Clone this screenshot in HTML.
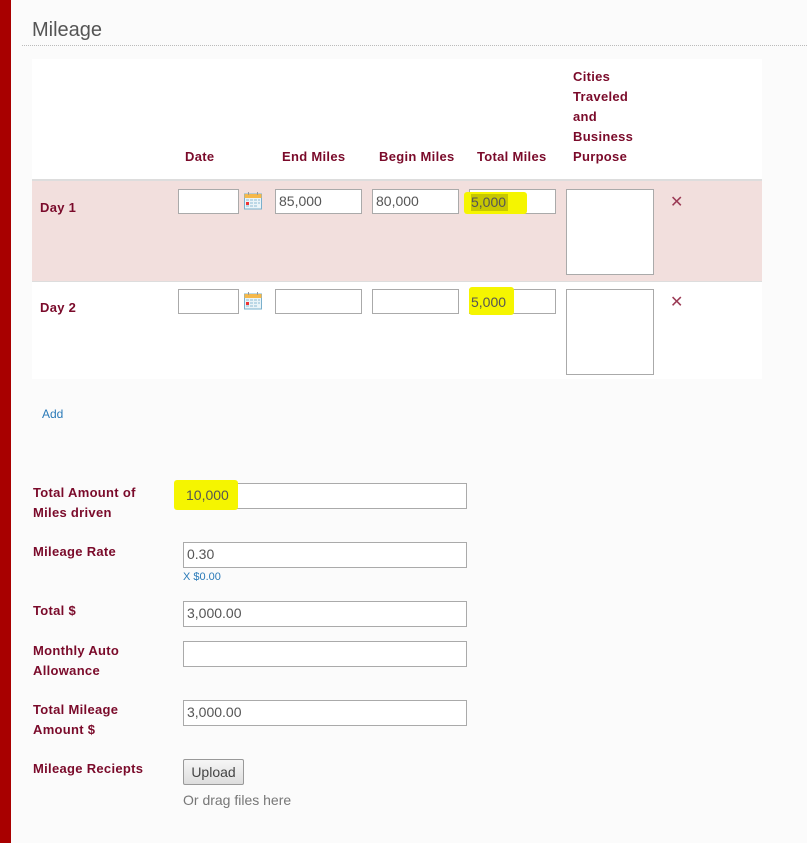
<!DOCTYPE html>
<html><head><meta charset="utf-8"><style>
*{box-sizing:border-box;margin:0;padding:0}
body{width:807px;height:843px;background:#fbfbfb;position:relative;overflow:hidden;font-family:"Liberation Sans",Arial,sans-serif}
.a{position:absolute}
.lbl{color:#7a0a2a;font-weight:bold;font-size:13px;line-height:20px;letter-spacing:0.3px}
.in{position:absolute;background:#fff;border:1px solid #aaa;font-size:14px;color:#555;padding-left:3px;line-height:23px}
.hl{position:absolute;background:#f5f500;border-radius:3px}
.x{position:absolute;color:#9b3a55;font-size:16px;line-height:20px}
</style></head><body>
<div class="a" style="left:0;top:0;width:11px;height:843px;background:#a80000"></div>
<div class="a" style="left:32px;top:19px;font-size:20px;color:#555">Mileage</div>
<div class="a" style="left:22px;top:45px;width:785px;border-top:1px dotted #bbb"></div>
<div class="a" style="left:32px;top:59px;width:730px;height:320px;background:#fff"></div>
<div class="a" style="left:32px;top:179px;width:730px;height:2px;background:#ddd"></div>
<div class="a" style="left:32px;top:181px;width:730px;height:100px;background:#f2dfdd"></div>
<div class="a" style="left:32px;top:281px;width:730px;height:1px;background:#ddd"></div>
<div class="a lbl" style="left:185px;top:147px">Date</div>
<div class="a lbl" style="left:282px;top:147px">End Miles</div>
<div class="a lbl" style="left:379px;top:147px">Begin Miles</div>
<div class="a lbl" style="left:477px;top:147px">Total Miles</div>
<div class="a lbl" style="left:573px;top:67px">Cities<br>Traveled<br>and<br>Business<br>Purpose</div>
<div class="a lbl" style="left:40px;top:198px">Day 1</div>
<div class="a lbl" style="left:40px;top:298px">Day 2</div>

<div class="in" style="left:178px;top:189px;width:61px;height:25px"></div>
<div class="in" style="left:275px;top:189px;width:87px;height:25px">85,000</div>
<div class="in" style="left:372px;top:189px;width:87px;height:25px">80,000</div>
<div class="in" style="left:469px;top:189px;width:87px;height:25px"></div>
<div class="hl" style="left:464px;top:192px;width:63px;height:22px"></div>
<div class="a" style="left:471px;top:194px;width:37px;height:17px;background:#c8c800"></div>
<div class="a" style="left:471px;top:191px;font-size:14px;line-height:23px;color:#555">5,000</div>
<div class="in" style="left:566px;top:189px;width:88px;height:86px"></div>
<div class="x" style="left:670px;top:193px">✕</div>

<div class="in" style="left:178px;top:289px;width:61px;height:25px"></div>
<div class="in" style="left:275px;top:289px;width:87px;height:25px"></div>
<div class="in" style="left:372px;top:289px;width:87px;height:25px"></div>
<div class="in" style="left:469px;top:289px;width:87px;height:25px"></div>
<div class="hl" style="left:469px;top:287px;width:45px;height:28px"></div>
<div class="a" style="left:471px;top:291px;font-size:14px;line-height:23px;color:#555">5,000</div>
<div class="in" style="left:566px;top:289px;width:88px;height:86px"></div>
<div class="x" style="left:670px;top:293px">✕</div>

<svg class="a" style="left:244px;top:192px" width="18" height="18" viewBox="0 0 18 18"><rect x="0.5" y="2" width="17" height="15" fill="#eaf4f8" stroke="#7ab0cc"/><rect x="0.5" y="2" width="17" height="4" fill="#f5b84a"/><g fill="#bcd8e6"><rect x="2" y="7" width="3" height="2"/><rect x="6" y="7" width="3" height="2"/><rect x="10" y="7" width="3" height="2"/><rect x="14" y="7" width="2" height="2"/><rect x="6" y="10" width="3" height="2"/><rect x="10" y="10" width="3" height="2"/><rect x="14" y="10" width="2" height="2"/><rect x="2" y="13" width="3" height="2"/><rect x="6" y="13" width="3" height="2"/><rect x="10" y="13" width="3" height="2"/></g><rect x="2" y="10" width="3" height="3" fill="#e33"/><rect x="4" y="0" width="1" height="3" fill="#999"/><rect x="13" y="0" width="1" height="3" fill="#999"/></svg>
<svg class="a" style="left:244px;top:292px" width="18" height="18" viewBox="0 0 18 18"><rect x="0.5" y="2" width="17" height="15" fill="#eaf4f8" stroke="#7ab0cc"/><rect x="0.5" y="2" width="17" height="4" fill="#f5b84a"/><g fill="#bcd8e6"><rect x="2" y="7" width="3" height="2"/><rect x="6" y="7" width="3" height="2"/><rect x="10" y="7" width="3" height="2"/><rect x="14" y="7" width="2" height="2"/><rect x="6" y="10" width="3" height="2"/><rect x="10" y="10" width="3" height="2"/><rect x="14" y="10" width="2" height="2"/><rect x="2" y="13" width="3" height="2"/><rect x="6" y="13" width="3" height="2"/><rect x="10" y="13" width="3" height="2"/></g><rect x="2" y="10" width="3" height="3" fill="#e33"/><rect x="4" y="0" width="1" height="3" fill="#999"/><rect x="13" y="0" width="1" height="3" fill="#999"/></svg>

<div class="a" style="left:42px;top:407px;font-size:12px;color:#2a7ab8">Add</div>

<div class="a lbl" style="left:33px;top:483px">Total Amount of<br>Miles driven</div>
<div class="in" style="left:183px;top:483px;width:284px;height:26px"></div>
<div class="hl" style="left:174px;top:480px;width:64px;height:30px"></div>
<div class="a" style="left:186px;top:484px;font-size:14px;line-height:23px;color:#555">10,000</div>
<div class="a lbl" style="left:33px;top:542px">Mileage Rate</div>
<div class="in" style="left:183px;top:542px;width:284px;height:26px">0.30</div>
<div class="a" style="left:183px;top:571px;font-size:11px;color:#2a7ab8">X $0.00</div>
<div class="a lbl" style="left:33px;top:601px">Total $</div>
<div class="in" style="left:183px;top:601px;width:284px;height:26px">3,000.00</div>
<div class="a lbl" style="left:33px;top:641px">Monthly Auto<br>Allowance</div>
<div class="in" style="left:183px;top:641px;width:284px;height:26px"></div>
<div class="a lbl" style="left:33px;top:700px">Total Mileage<br>Amount $</div>
<div class="in" style="left:183px;top:700px;width:284px;height:26px">3,000.00</div>
<div class="a lbl" style="left:33px;top:759px">Mileage Reciepts</div>
<div class="a" style="left:183px;top:759px;width:61px;height:26px;border:1px solid #999;border-radius:2px;background:linear-gradient(#f6f6f6,#ddd);font-size:14px;color:#444;text-align:center;line-height:24px">Upload</div>
<div class="a" style="left:183px;top:792px;font-size:14px;color:#777">Or drag files here</div>
</body></html>
